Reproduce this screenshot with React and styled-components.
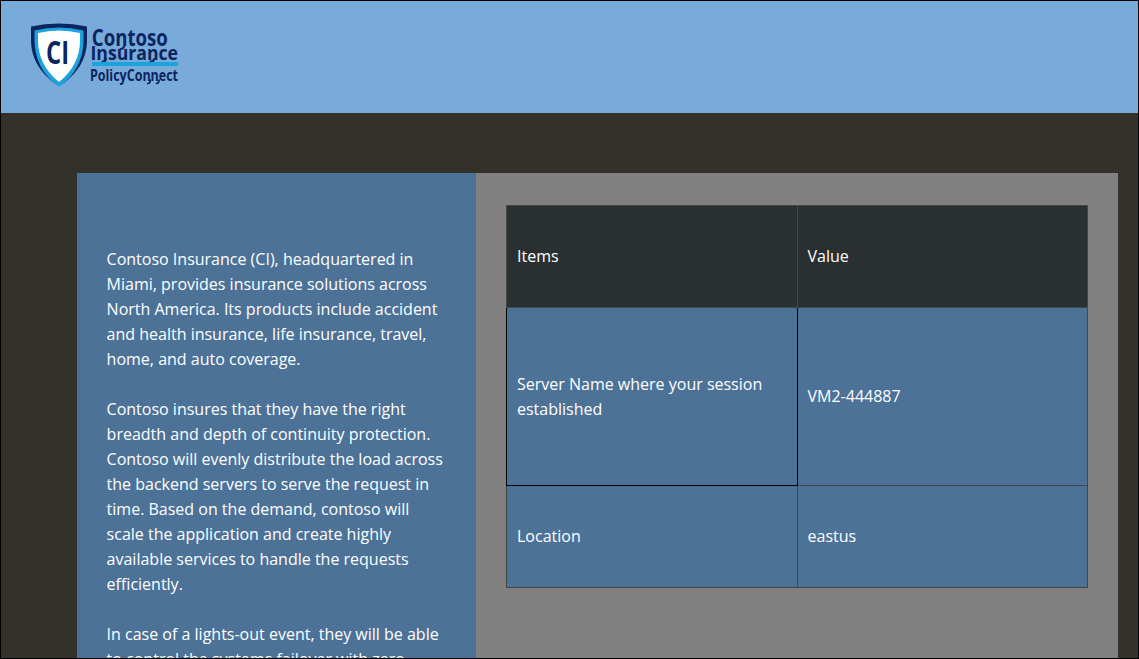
import React from "react";
import styled, { createGlobalStyle } from "styled-components";

const GlobalStyle = createGlobalStyle`
  *, *::before, *::after { box-sizing: border-box; }
  body { margin: 0; overflow: hidden; }
`;

const Page = styled.div`
  display: flex;
  flex-direction: column;
  width: 1139px;
  height: 659px;
  overflow: hidden;
  border: 1px solid #000;
  background: #34312a;
  color: #fff;
  font: 16px/25px "Open Sans", "Noto Sans", sans-serif;
`;

const Header = styled.header`
  flex: 0 0 112px;
  padding: 19px 26px;
  background: #78aada;
`;

const Content = styled.main`
  display: flex;
  flex: 1;
  min-height: 0;
  padding: 60px 20px 0 76px;
`;

const About = styled.section`
  flex: 0 0 399px;
  overflow: hidden;
  padding: 74px 30px 0 29.6px;
  background: #4c7298;
`;

const Paragraph = styled.p`
  margin: 0 0 25px;
`;

const Details = styled.section`
  flex: 1;
  padding: 32px 30px 0;
  background: #808080;
`;

const Table = styled.table`
  width: 582px;
  table-layout: fixed;
  border-collapse: collapse;
`;

const Row = styled.tr`
  height: ${(p) => p.$height}px;
  background: ${(p) => (p.$head ? "#2a2f32" : "#4c7298")};
`;

const Cell = styled.td`
  padding: 0 10px;
  border: 1px solid ${(p) => (p.$active ? "#000" : "#444648")};
  text-align: left;
  vertical-align: middle;
  font-weight: 400;
`;

const Logo = styled.svg`
  display: block;
`;

function ContosoLogo() {
  return (
    <Logo width="156" height="72" viewBox="27 20 156 72" fill="#0a2560">
      <path d="M31 26.500Q59 20.500 87 26.500V40C87 59 77 75 59 86C41 75 31 59 31 40Z" />
      <path d="M34.5 30.500Q59 24.500 83.500 30.500V40C83.500 58 76 75 59 86.500C42 75 34.500 58 34.500 40Z" fill="#1ba3dc" />
      <path d="M38 33Q59 28 80 33V41C80 56 73 71 59 82C45 71 38 56 38 41Z" fill="#fff" />
      <g fontFamily="Open Sans, sans-serif" fontWeight="700">
        <text x="46" y="64" fontSize="32" textLength="23" lengthAdjust="spacingAndGlyphs">CI</text>
        <text x="91.800" y="46" fontSize="22.500" textLength="76" lengthAdjust="spacingAndGlyphs">Contoso</text>
        <text x="90.500" y="59.500" fontSize="20" textLength="87.500" lengthAdjust="spacingAndGlyphs">Insurance</text>
        <text x="90" y="80.500" fontSize="15.500" textLength="88" lengthAdjust="spacingAndGlyphs">PolicyConnect</text>
      </g>
      <g fill="none" stroke="#0a2560" strokeLinecap="round">
        <path d="M124 46Q124 49 120.500 49M106 59Q106 61.500 102.500 61.500M154 59Q154 61.500 150.500 61.500" strokeWidth="2" />
        <path d="M150.300 80Q150.300 83.500 147.800 83.500M159 80Q159 83.500 156.500 83.500" strokeWidth="1.700" />
      </g>
      <path d="M92 62H178V66H92Z" fill="#1ba3dc" />
    </Logo>
  );
}

const rows = [
  { item: "Server Name where your session established", value: "VM2-444887", height: 178, active: true },
  { item: "Location", value: "eastus", height: 102 },
];

export default function App() {
  return (
    <Page>
      <GlobalStyle />
      <Header>
        <ContosoLogo />
      </Header>
      <Content>
        <About>
          <Paragraph>
            Contoso Insurance (CI), headquartered in Miami, provides insurance solutions across North America. Its
            products include accident and health insurance, life insurance, travel, home, and auto coverage.
          </Paragraph>
          <Paragraph>
            Contoso insures that they have the right breadth and depth of continuity protection. Contoso will evenly
            distribute the load across the backend servers to serve the request in time. Based on the demand, contoso
            will scale the application and create highly available services to handle the requests efficiently.
          </Paragraph>
          <Paragraph>
            In case of a lights-out event, they will be able to control the systems failover with zero
          </Paragraph>
        </About>
        <Details>
          <Table>
            <thead>
              <Row $head $height={102}>
                <Cell as="th">Items</Cell>
                <Cell as="th">Value</Cell>
              </Row>
            </thead>
            <tbody>
              {rows.map((row) => (
                <Row key={row.item} $height={row.height}>
                  <Cell $active={row.active}>{row.item}</Cell>
                  <Cell>{row.value}</Cell>
                </Row>
              ))}
            </tbody>
          </Table>
        </Details>
      </Content>
    </Page>
  );
}
